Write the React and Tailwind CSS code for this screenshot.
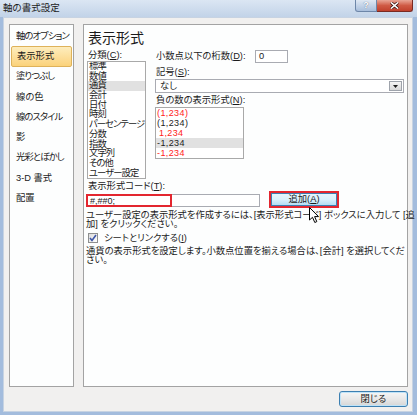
import React from 'react';

const font = "font-['Liberation_Sans','Noto_Sans_CJK_JP',sans-serif] [font-feature-settings:'palt']";

const categories = [
  { label: '軸のオプション', tight: true },
  { label: '表示形式', selected: true },
  { label: '塗りつぶし', tight: true },
  { label: '線の色' },
  { label: '線のスタイル', tight: true },
  { label: '影' },
  { label: '光彩とぼかし', tight: true },
  { label: '3-D 書式' },
  { label: '配置' },
];

const formats = ['標準', '数値', '通貨', '会計', '日付', '時刻', 'パーセンテージ', '分数', '指数', '文字列', 'その他', 'ユーザー設定'];

const negatives = [
  { text: '(1,234)', red: true },
  { text: '(1,234)', red: false },
  { text: '1,234', red: true, indent: true },
  { text: '-1,234', red: false, selected: true },
  { text: '-1,234', red: true },
];

function TitleBar() {
  return (
    <div className="h-[17px] flex items-start bg-gradient-to-b from-[#dbe6f3] to-[#c2d3e8]">
      <span className="ml-[3px] mt-[1px] text-[9.5px] leading-[13px] text-[#1b1b1b]">軸の書式設定</span>
      <div className="ml-auto mr-[4px] flex">
        <div className="w-[22px] h-[12px] rounded-bl-[3px] border border-t-0 border-[#6d86a8] bg-gradient-to-b from-[#dfe8f3] to-[#a9bfdc] flex items-center justify-center">
          <span className="text-[9px] leading-[9px] font-bold text-white [text-shadow:0_0_1px_#3a4f6e]">?</span>
        </div>
        <div className="w-[36px] h-[12px] rounded-br-[3px] border border-t-0 border-l-0 border-[#7a2a22] bg-gradient-to-b from-[#e8a596] via-[#cf5a45] to-[#c0402c] flex items-center justify-center">
          <svg width="9" height="7" viewBox="0 0 9 7">
            <path d="M1 0.5 L8 6.5 M8 0.5 L1 6.5" stroke="#3a1410" strokeWidth="3" />
            <path d="M1 0.5 L8 6.5 M8 0.5 L1 6.5" stroke="#ffffff" strokeWidth="1.6" />
          </svg>
        </div>
      </div>
    </div>
  );
}

function LeftNav() {
  return (
    <div className="shrink-0 w-[65px] h-[363px] border border-[#a3a3a3] bg-[#fdfefe] pt-[1px] px-[1px] overflow-hidden">
      {categories.map((c) => (
        <div
          key={c.label}
          className={
            'h-[20.3px] flex items-center pl-[5px] text-[9.3px] leading-[11px] whitespace-nowrap ' +
            (c.selected
              ? 'border border-[#deb25a] rounded-[2px] bg-gradient-to-b from-[#fdedbd] to-[#fbd27a] pl-[4px] '
              : '') +
            (c.tight ? 'tracking-[-0.9px]' : '')
          }
        >
          {c.label}
        </div>
      ))}
    </div>
  );
}

function FormatPanel() {
  return (
    <div className="min-w-0 flex-1 h-[363px] border border-[#a3a3a3] bg-[#fdfefe] flex flex-col pl-[4px] text-[9.3px] text-[#1b1b1b]">
      <div className="pt-[5px] text-[14px] leading-[17px]">表示形式</div>

      <div className="flex">
        {/* category list */}
        <div className="shrink-0 flex flex-col -ml-[1px]">
          <div className="mt-[2px] h-[12px] leading-[12px] pl-[1px]">
            分類(<u>C</u>):
          </div>
          <div className="w-[59px] h-[118px] border border-[#a9a9a9] bg-white overflow-hidden">
            {formats.map((f) => (
              <div
                key={f}
                className={
                  'h-[9.7px] leading-[9.7px] pl-[1px] whitespace-nowrap tracking-[-0.9px] ' +
                  (f === '通貨' ? 'bg-[#e1e1e1]' : '')
                }
              >
                {f}
              </div>
            ))}
          </div>
        </div>

        {/* options */}
        <div className="shrink-0 ml-[9px] w-[249px] flex flex-col">
          <div className="mt-[3px] h-[13px] flex items-center">
            <span className="w-[100px] pl-[1px] whitespace-nowrap">
              小数点以下の桁数(<u>D</u>):
            </span>
            <div className="w-[33px] h-[13px] border border-[#a9abb2] bg-white pl-[3px] leading-[11px]">0</div>
          </div>
          <div className="mt-[4px] h-[10px] leading-[10px] pl-[1px]">
            記号(<u>S</u>):
          </div>
          <div className="mt-[2px] h-[14px] border border-[#a9abb2] bg-white flex items-center">
            <span className="pl-[4px] leading-[12px]">なし</span>
            <div className="ml-auto mr-[1px] w-[13px] h-[10px] border border-[#9ea3ab] bg-gradient-to-b from-[#f4f4f4] to-[#d8d8d8] flex items-center justify-center">
              <svg width="5" height="3" viewBox="0 0 5 3">
                <path d="M0 0 H5 L2.5 3 Z" fill="#1b1b1b" />
              </svg>
            </div>
          </div>
          <div className="mt-[2px] h-[10px] leading-[10px] pl-[1px]">
            負の数の表示形式(<u>N</u>):
          </div>
          <div className="mt-[2px] w-[89px] h-[52px] border border-[#a9a9a9] bg-white">
            {negatives.map((n, i) => (
              <div
                key={i}
                className={
                  'h-[10px] leading-[10px] pl-[1px] text-[9px] tracking-[0.4px] ' +
                  (n.red ? 'text-[#ff1a1a] ' : 'text-[#1b1b1b] ') +
                  (n.selected ? 'bg-[#e1e1e1] ' : '') +
                  (n.indent ? 'pl-[3px]' : '')
                }
              >
                {n.text}
              </div>
            ))}
          </div>
        </div>
      </div>

      <div className="mt-[2px] h-[10px] leading-[10px]">
        表示形式コード(<u>T</u>):
      </div>
      <div className="h-[17px] flex items-center -ml-[2px]">
        <div className="shrink-0 relative w-[174px] h-[13px] mt-[1px] border border-[#a9abb2] bg-white">
          <span className="pl-[3px] leading-[11px] text-[9px]">#,##0;</span>
          <div className="absolute -left-[1px] -top-[1px] w-[86px] h-[13px] border-2 border-[#e3262f]" />
        </div>
        <div className="shrink-0 ml-[9px] w-[70px] h-[17px] border-2 border-[#e3262f] p-0">
          <div className="w-full h-full border border-[#3c7fb1] bg-gradient-to-b from-[#e6f5fd] via-[#d9f0fc] to-[#b4def4] flex items-center justify-center leading-[11px]">
            追加(<u>A</u>)
          </div>
        </div>
      </div>

      <div className="mt-[3px] leading-[9px] whitespace-nowrap -ml-[2px]">
        <div>ユーザー設定の表示形式を作成するには、[表示形式コード] ボックスに入力して [追</div>
        <div>加] をクリックください。</div>
      </div>

      <div className="mt-[4px] h-[10px] flex items-center">
        <div className="shrink-0 w-[10px] h-[10px] border border-[#8e8f8f] bg-gradient-to-br from-[#dcdcdc] to-[#ffffff] flex items-center justify-center">
          <svg width="8" height="8" viewBox="0 0 8 8">
            <path d="M1 4 L3 6.5 L7 1" stroke="#3d56a8" strokeWidth="1.6" fill="none" />
          </svg>
        </div>
        <span className="ml-[6px] leading-[10px]">
          シートとリンクする(<u>I</u>)
        </span>
      </div>

      <div className="mt-[3.5px] leading-[9px] whitespace-nowrap -ml-[2px]">
        <div>通貨の表示形式を設定します。小数点位置を揃える場合は、[会計] を選択してくだ</div>
        <div>さい。</div>
      </div>
    </div>
  );
}

export default function App() {
  return (
    <div className={'relative w-[417px] h-[415px] bg-[#a3bcdd] flex flex-col text-[#1b1b1b] ' + font}>
      <TitleBar />
      <div className="ml-[3px] mr-[4px] mb-[3px] flex-1 bg-[#f1f0ef] border border-[#c7d3e2] pt-[6px] pl-[5px] pr-[4px] flex flex-col">
        <div className="flex gap-[9px]">
          <LeftNav />
          <FormatPanel />
        </div>
        <div className="mt-[4px] flex justify-end">
          <button className="w-[69px] h-[16px] rounded-[3px] border border-[#3c7fb1] bg-gradient-to-b from-[#f6f6f6] via-[#e8e8e8] to-[#d6d6d6] text-[9.3px] leading-[12px] shadow-[inset_0_0_0_1px_#bfe3f8]">
            閉じる
          </button>
        </div>
      </div>

      {/* mouse pointer */}
      <svg className="absolute left-[309px] top-[207px]" width="11" height="17" viewBox="0 0 11 17">
        <path d="M0.5 0.5 L0.5 13 L3.5 10.3 L5.8 15.5 L7.8 14.6 L5.6 9.6 L9.5 9.6 Z" fill="#ffffff" stroke="#000000" strokeWidth="1" />
      </svg>
    </div>
  );
}
